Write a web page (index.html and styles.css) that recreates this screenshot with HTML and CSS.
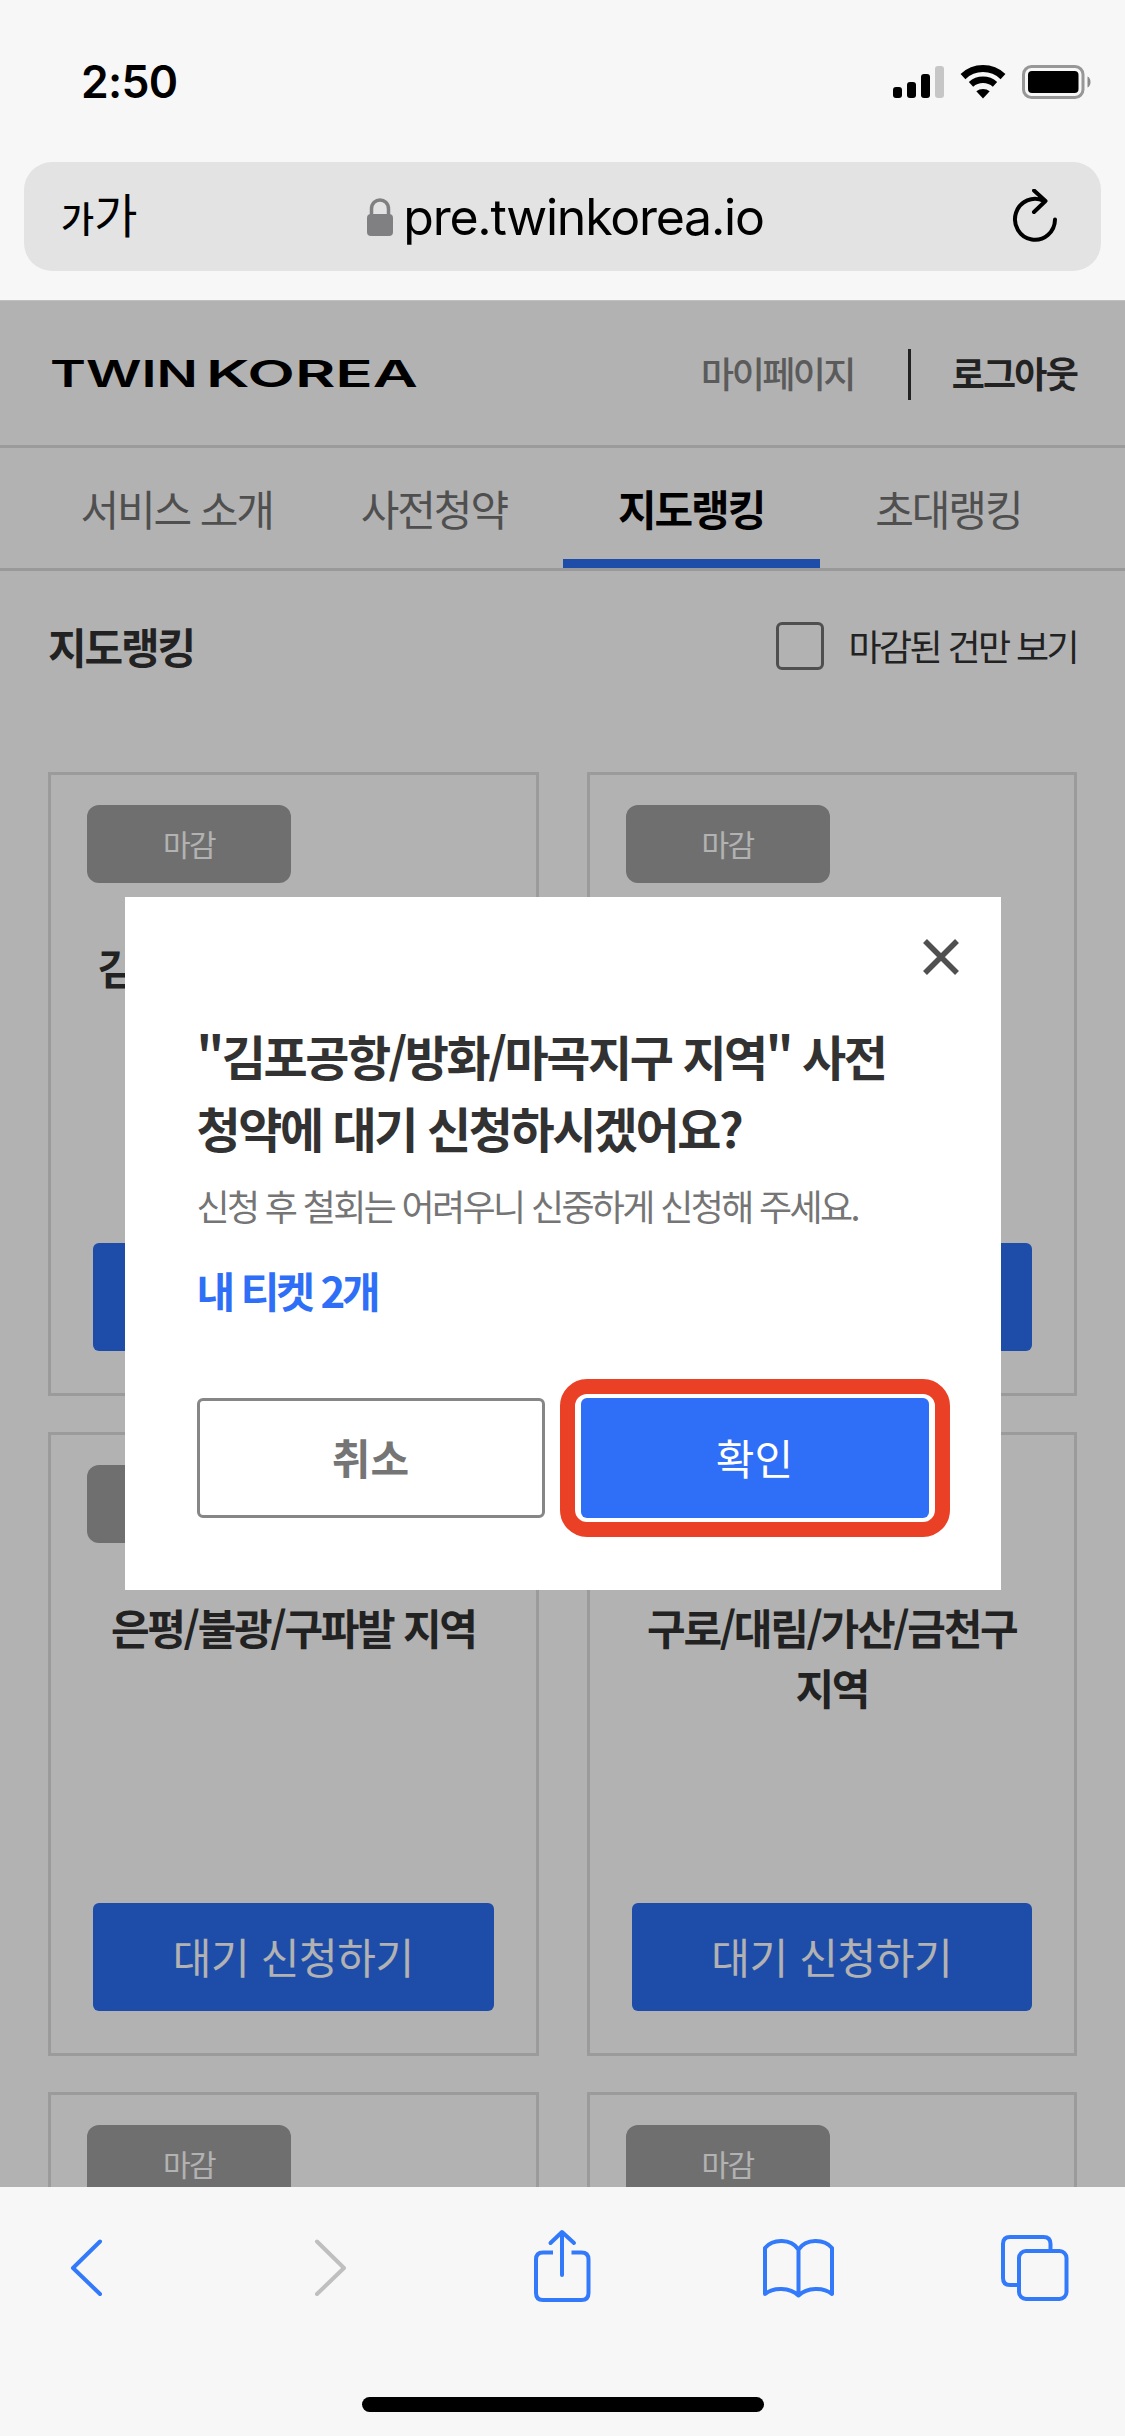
FILE: index.html
```html
<!DOCTYPE html>
<html lang="ko">
<head>
<meta charset="utf-8">
<title>지도랭킹 - TWINKOREA</title>
<link rel="stylesheet" href="styles.css">
</head>
<body>
<div class="phone">
  <header class="chrome">
    <div class="status">
      <span class="time">2:50</span>
      <svg class="status-icons" viewBox="0 0 200 36" aria-hidden="true">
        <rect x="0" y="23" width="9" height="11" rx="3"/>
        <rect x="14" y="18" width="9" height="16" rx="3"/>
        <rect x="28" y="10" width="9" height="24" rx="3"/>
        <rect x="42" y="2" width="9" height="32" rx="3" fill="#c6c6c6"/>
        <g fill="none" stroke="#000">
          <path d="M70 12.6A29 29 0 0 1 110 12.6" stroke-width="7"/>
          <path d="M78 20.3A18 18 0 0 1 102 20.3" stroke-width="6.500"/>
        </g>
        <path d="M90 34.500L83.300 27.300A10.500 10.500 0 0 1 96.700 27.300Z"/>
        <rect x="130.500" y="2.500" width="59.500" height="31" rx="8" fill="none" stroke="#979797" stroke-width="3"/>
        <rect x="135" y="7" width="50.500" height="22" rx="4"/>
        <path d="M194.500 12.500C198.500 14 198.500 22 194.500 23.500Z" fill="#8a8a8a"/>
      </svg>
    </div>
    <div class="urlbar">
      <span class="reader"><small>가</small>가</span>
      <span class="address">
        <svg class="lock" viewBox="0 0 26 38" aria-hidden="true">
          <path d="M4.500 18V11C4.500 -1 21.500 -1 21.500 11V18" fill="none" stroke="#808082" stroke-width="3.500"/>
          <rect y="16" width="26" height="22" rx="4" fill="#808082"/>
        </svg>
        <span class="url">pre.twinkorea.io</span>
      </span>
      <svg class="reload" viewBox="0 2.500 48 56" aria-hidden="true">
        <path d="M44 33A20 20.500 0 1 1 33 14.500M23 4L34.500 14.500L23 25.500" fill="none" stroke="#000" stroke-width="4" stroke-linecap="round" stroke-linejoin="round"/>
      </svg>
    </div>
  </header>

  <main class="page">
    <div class="site-head">
      <svg class="logo" viewBox="0 0 368 30" role="img">
        <text x="0" y="29" textLength="148" lengthAdjust="spacingAndGlyphs">TWIN</text>
        <text x="156" y="29" textLength="212" lengthAdjust="spacingAndGlyphs">KOREA</text>
      </svg>
      <div class="account">
        <a class="mypage">마이페이지</a>
        <span class="divider"></span>
        <a class="logout">로그아웃</a>
      </div>
    </div>
    <nav class="tabs">
      <a class="tab">서비스 소개</a>
      <a class="tab">사전청약</a>
      <a class="tab active">지도랭킹</a>
      <a class="tab">초대랭킹</a>
    </nav>
    <div class="section-head">
      <h2>지도랭킹</h2>
      <label class="filter"><span class="checkbox"></span>마감된 건만 보기</label>
    </div>
    <div class="cards">
      <article class="card"><span class="badge">마감</span><h3>김포공항/방화/마곡지구</h3><button class="apply"></button></article>
      <article class="card"><span class="badge">마감</span><button class="apply"></button></article>
      <article class="card"><span class="badge"></span><h3>은평/불광/구파발 지역</h3><button class="apply">대기 신청하기</button></article>
      <article class="card"><span class="badge"></span><h3>구로/대림/가산/금천구 지역</h3><button class="apply">대기 신청하기</button></article>
      <article class="card"><span class="badge">마감</span></article>
      <article class="card"><span class="badge">마감</span></article>
    </div>
    <div class="overlay">
      <section class="modal">
        <svg class="close" viewBox="0 0 36 36" aria-hidden="true"><path d="M2 2L34 34M34 2L2 34" stroke="#505050" stroke-width="5.500"/></svg>
        <h1>"김포공항/방화/마곡지구 지역" 사전<br>청약에 대기 신청하시겠어요?</h1>
        <p class="note">신청 후 철회는 어려우니 신중하게 신청해 주세요.</p>
        <p class="tickets">내 티켓 2개</p>
        <div class="actions">
          <button class="cancel">취소</button>
          <button class="confirm">확인</button>
        </div>
      </section>
    </div>
  </main>

  <footer class="toolbar">
    <svg class="tools" viewBox="0 0 1125 100" aria-hidden="true">
      <g fill="none" stroke="#327afa" stroke-width="4" stroke-linecap="round" stroke-linejoin="round">
        <path d="M100 34.500L73 61L100 87"/>
        <path d="M317 34.500L344 61L317 87" stroke="#bfbfbf"/>
        <path stroke-linecap="butt" d="M553 45.500H543Q536 45.500 536 52.500V86Q536 93 543 93H581.500Q588.500 93 588.500 86V52.500Q588.500 45.500 581.500 45.500H571.500"/>
        <path d="M562 68V26M550.500 36L562 25L574 36"/>
        <path d="M798.500 42.500C791 31.500 773 31.500 765 41V87C773 80 790 80 798.500 88.500C807 80 824 80 832 87V41C824 31.500 806 31.500 798.500 42.500V88.500"/>
        <path stroke-linecap="butt" d="M1019 78H1010Q1003 78 1003 71V37Q1003 30 1010 30H1043.500Q1050.500 30 1050.500 37V44"/>
        <rect x="1019" y="44" width="47.500" height="48" rx="7"/>
      </g>
    </svg>
    <div class="home"></div>
  </footer>
</div>
</body>
</html>
```
FILE: styles.css
```css
* { box-sizing: border-box; }
body { margin: 0; }
h1, h2, h3, p { margin: 0; }
button { border: 0; padding: 0; font-family: inherit; }

.phone {
  width: 1125px;
  height: 2436px;
  display: flex;
  flex-direction: column;
  overflow: hidden;
  background: #f7f7f7;
  font-family: "Noto Sans CJK KR", sans-serif;
}

/* Browser chrome */
.chrome { height: 301px; flex: none; padding: 0 24px; border-bottom: 1px solid #bfbfbf; }
.status {
  height: 162px;
  display: flex;
  justify-content: space-between;
  align-items: flex-start;
  padding: 64px 8px 0 57px;
}
.time { font: 600 44.500px/37px Inter, sans-serif; letter-spacing: -0.7px; }
.status-icons { width: 200px; height: 36px; }
.urlbar {
  height: 109px;
  display: grid;
  grid-template-columns: 1fr auto 1fr;
  align-items: center;
  padding: 0 42px 0 37px;
  border-radius: 28px;
  background: #e3e3e3;
}
.reader { font-size: 47px; line-height: 60px; font-weight: 400; padding-bottom: 4px; }
.reader small { font-size: 36px; font-weight: 500; }
.address { display: flex; align-items: center; gap: 10px; margin-left: 11px; }
.lock { width: 26px; height: 38px; }
.url { font: 400 50px/60px Inter, sans-serif; letter-spacing: -1.25px; }
.reload { width: 48px; height: 56px; justify-self: end; }

/* Site */
.page {
  position: relative;
  height: 1886px;
  flex: none;
  overflow: hidden;
  background: #fff;
  letter-spacing: -0.05em;
  color: #323232;
}
.site-head {
  height: 147px;
  display: flex;
  justify-content: space-between;
  align-items: center;
  padding: 0 48px 0 50px;
  border-bottom: 3px solid #dedede;
}
.logo { width: 368px; height: 30px; overflow: visible; letter-spacing: 0; }
.logo text { font: 600 37px Inter, sans-serif; }
.account { display: flex; align-items: center; font-size: 36px; line-height: 52px; letter-spacing: -0.05em; }
.mypage { margin-top: -2px; color: #838383; font-weight: 500; letter-spacing: -2.600px; }
.divider { width: 3px; height: 51px; margin: 2px 41px 0 54px; background: #323232; }
.logout { margin-top: -2px; font-weight: 700; }
.tabs {
  height: 123px;
  display: grid;
  grid-template-columns: repeat(4, 1fr);
  padding: 0 48px;
  border-bottom: 3px solid #dbdbdb;
  font-size: 42px;
  letter-spacing: -0.05em;
}
.tab { text-align: center; line-height: 120px; color: #727272; }
.tab.active { font-weight: 700; color: #000; box-shadow: inset 0 -9px #2c6ef2; }
.section-head {
  height: 201px;
  display: flex;
  justify-content: space-between;
  align-items: flex-start;
  padding: 43px 48px 0;
}
.section-head h2 { font-size: 42px; line-height: 63px; letter-spacing: -0.05em; }
.filter { display: flex; align-items: center; gap: 24px; font-size: 36px; line-height: 63px; letter-spacing: -2.600px; }
.checkbox { width: 48px; height: 48px; border: 3px solid #727272; border-radius: 6px; }
.cards {
  display: grid;
  grid-template-columns: 1fr 1fr;
  grid-auto-rows: 624px;
  gap: 36px 48px;
  padding: 0 48px;
}
.card {
  display: flex;
  flex-direction: column;
  padding: 30px 42px 42px;
  border: 3px solid #dedede;
}
.badge {
  width: 204px;
  height: 78px;
  flex: none;
  margin-left: -6px;
  border-radius: 12px;
  background: #a0a0a0;
  color: #fff;
  font-size: 30px;
  line-height: 76px;
  letter-spacing: -0.05em;
  text-align: center;
}
.card h3 {
  margin-top: 54px;
  font-size: 42px;
  line-height: 60px;
  letter-spacing: -2.300px;
  text-align: center;
  word-break: keep-all;
}
.apply {
  height: 108px;
  margin-top: auto;
  padding-bottom: 3px;
  border-radius: 6px;
  background: #2c6ef2;
  color: #fff;
  font-size: 42px;
  letter-spacing: -0.400px;
}

/* Dialog */
.overlay {
  position: absolute;
  inset: 0;
  display: flex;
  justify-content: center;
  align-items: flex-start;
  padding-top: 596px;
  background: rgba(0, 0, 0, 0.302);
}
.modal {
  width: 876px;
  height: 693px;
  display: flex;
  flex-direction: column;
  padding: 42px 72px 72px;
  background: #fff;
}
.close { width: 36px; height: 36px; flex: none; align-self: flex-end; margin-right: -30px; }
.modal h1 { margin-top: 44px; font-size: 48px; line-height: 72px; letter-spacing: -2.450px; white-space: nowrap; }
.note { margin-top: 15px; font-size: 36px; line-height: 54px; letter-spacing: -2.650px; color: #757575; white-space: nowrap; }
.tickets { margin-top: 26px; font-size: 42px; line-height: 63px; letter-spacing: -3.100px; font-weight: 700; color: #2f6ef7; }
.actions { display: grid; grid-template-columns: 1fr 1fr; gap: 36px; margin-top: auto; }
.actions button { height: 120px; border-radius: 6px; padding-bottom: 3px; font-size: 42px; }
.actions .cancel { border: 3px solid #868686; background: #fff; color: #757575; font-weight: 700; }
.actions .confirm { position: relative; background: #2f6ef7; color: #fff; }
.confirm::after {
  content: "";
  position: absolute;
  inset: -19px -21px;
  border: 15px solid #ea4026;
  border-radius: 27px;
}

/* Bottom toolbar */
.toolbar {
  flex: 1;
  display: flex;
  flex-direction: column;
  align-items: center;
  padding-top: 20px;
}
.tools { width: 1125px; height: 100px; overflow: visible; }
.home { width: 402px; height: 15px; margin-top: 90px; border-radius: 8px; background: #000; }
```
